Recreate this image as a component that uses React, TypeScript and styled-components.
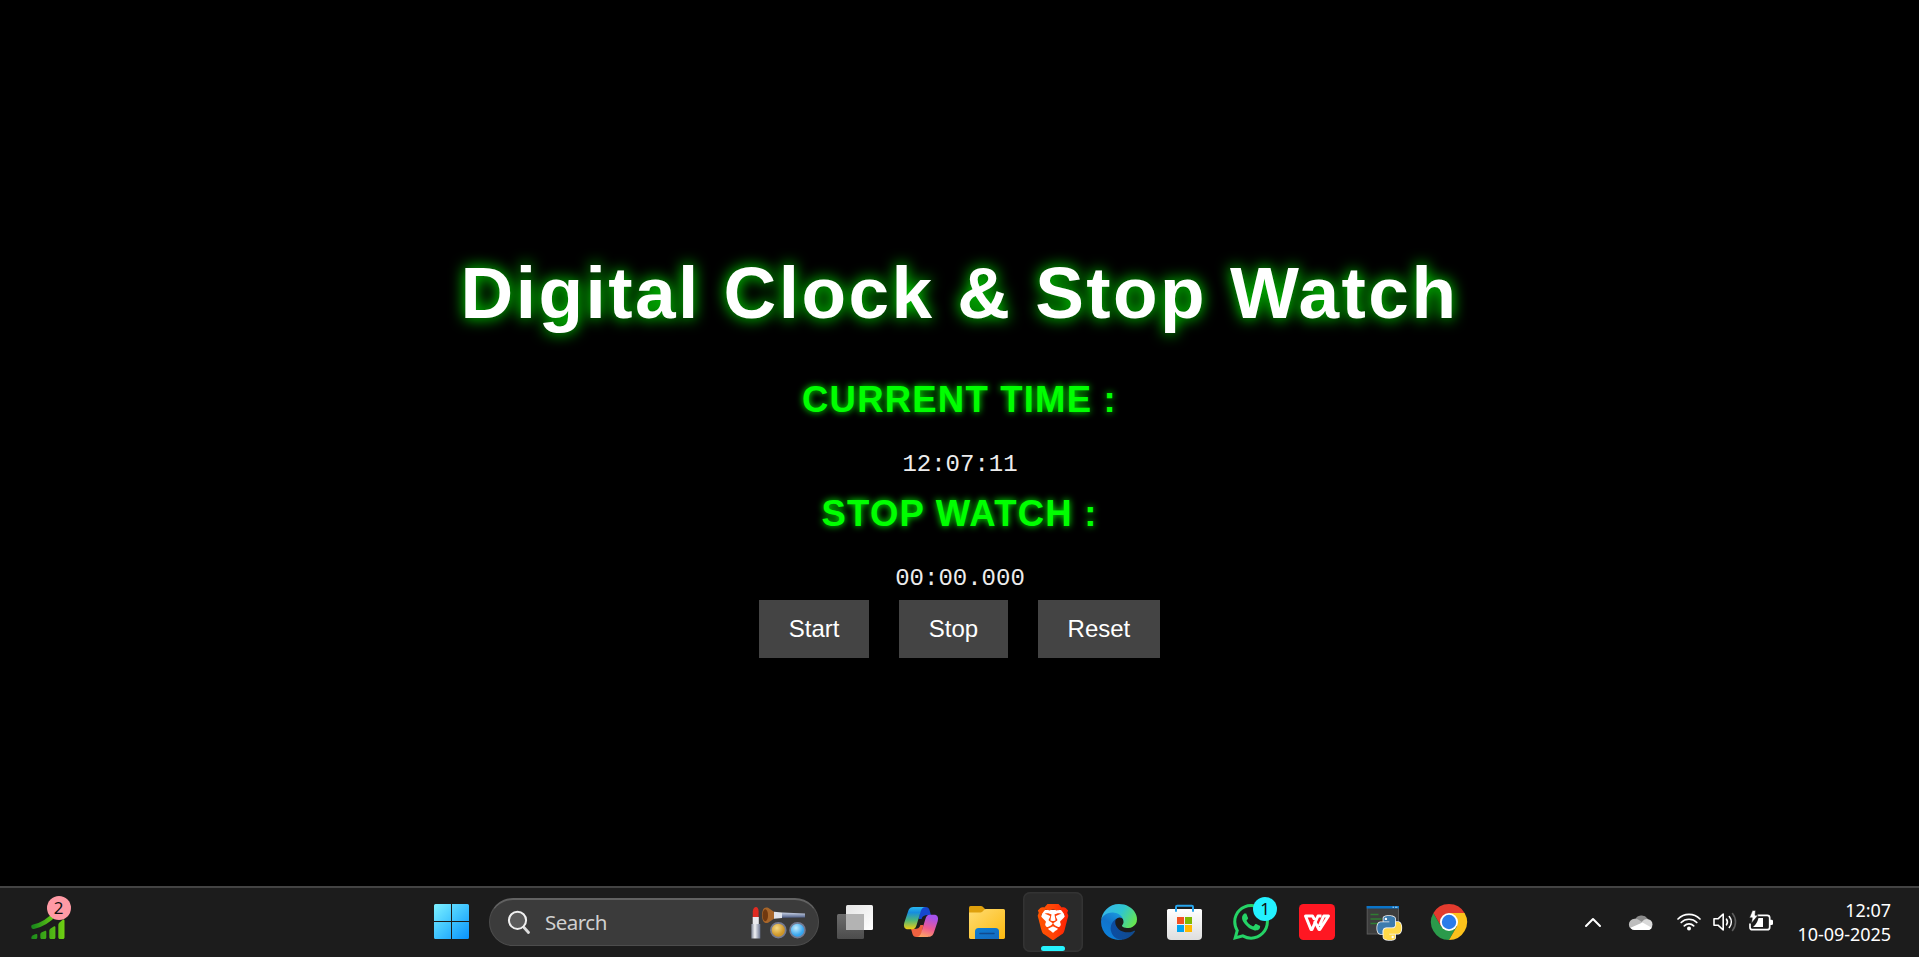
import React from "react";
import styled, { createGlobalStyle, css } from "styled-components";
import { SiBrave, SiWhatsapp } from "react-icons/si";

const GlobalStyle = createGlobalStyle`
  * { box-sizing: border-box; }
  html, body { margin: 0; padding: 0; background: #000; overflow: hidden; }
`;

const Screen = styled.div`
  display: flex;
  flex-direction: column;
  width: 100vw;
  height: 100vh;
  background: #000;
  color: #fff;
  font-family: Arial, "Liberation Sans", sans-serif;
`;

const Page = styled.main`
  flex: 1;
  display: flex;
  flex-direction: column;
  align-items: center;
  padding-top: 252px;
`;

const Title = styled.h1`
  margin: 0 0 45px;
  font-size: 73px;
  line-height: 82px;
  letter-spacing: 2.45px;
  white-space: nowrap;
  text-shadow: 0 0 15px #00ff00;
`;

const Heading = styled.h2`
  margin: 0 0 31px;
  font-size: 36.5px;
  line-height: 41px;
  letter-spacing: 1.2px;
  text-transform: uppercase;
  color: #00ff00;
  text-shadow: 0 0 7.5px #00ff00;
`;

const Readout = styled.div<{ $after: number }>`
  margin-bottom: ${(p) => p.$after}px;
  padding-left: 1px;
  font-family: "Liberation Mono", "Courier New", monospace;
  font-size: 24px;
  line-height: 27px;
  color: #ececec;
`;

const Controls = styled.div`
  display: flex;
  gap: 29.400px;
`;

const Button = styled.button`
  height: 58px;
  padding: 0 30px;
  border: 0;
  background: #444;
  color: #fff;
  font: 24px/28px Arial, "Liberation Sans", sans-serif;
`;

const Taskbar = styled.footer`
  flex: none;
  display: flex;
  align-items: center;
  height: 71px;
  padding-bottom: 2px;
  border-top: 2px solid #434343;
  background: #1c1c1c;
  font-family: "Segoe UI", "Noto Sans", sans-serif;
`;

const Widgets = styled.div`
  width: 421px;
  padding-left: 30px;
`;

const Apps = styled.div`
  display: flex;
  align-items: center;
  gap: 6px;
`;

const Slot = styled.div<{ $active?: boolean }>`
  position: relative;
  display: flex;
  align-items: center;
  justify-content: center;
  width: 60px;
  height: 60px;
  border-radius: 7px;
  ${(p) =>
    p.$active &&
    css`
      background: #2a2a2a;
      box-shadow: inset 0 0 0 1.5px #333;
      &::after {
        content: "";
        position: absolute;
        left: 18px;
        bottom: 1px;
        width: 24px;
        height: 5px;
        border-radius: 3px;
        background: #26f3ff;
      }
    `}
`;

const WidgetIcon = styled.div`
  position: relative;
  width: 36px;
  height: 36px;
`;

const Glyph = styled.svg`
  display: block;
  flex: none;
  overflow: visible;
`;

const Badge = styled.span<{ $color: string; $x: number; $y: number }>`
  position: absolute;
  left: ${(p) => p.$x}px;
  top: ${(p) => p.$y}px;
  width: 24px;
  height: 24px;
  border-radius: 50%;
  background: ${(p) => p.$color};
  color: #111;
  font-size: 17px;
  line-height: 24px;
  text-align: center;
`;

const SearchBox = styled.div`
  display: flex;
  align-items: center;
  width: 330px;
  height: 48px;
  margin: 0 0 0 2px;
  padding: 0 12px 0 16.500px;
  border: 1.5px solid #4c4c4c;
  border-top: 2px solid #626262;
  border-radius: 24px;
  background: #3b3b3b;
`;

const SearchLabel = styled.span`
  flex: 1;
  padding-left: 14.500px;
  color: #d0d0d0;
  font-size: 20.5px;
  line-height: 28px;
  letter-spacing: -0.5px;
`;

const Tray = styled.div`
  display: flex;
  align-items: center;
  margin-left: auto;
  padding-right: 28px;
`;

const TrayItem = styled.div<{ $gap: number }>`
  display: flex;
  margin-right: ${(p) => p.$gap}px;
`;

const DateTime = styled.div`
  width: 117px;
  text-align: right;
  font-size: 18px;
  line-height: 24px;
  letter-spacing: -0.05px;
  white-space: nowrap;
`;

const BraveMark = styled.div`
  display: grid;
  place-items: center;
  & > * {
    grid-area: 1 / 1;
  }
`;

const ChartIcon = () => (
  <Glyph width="36" height="36" viewBox="0 0 36 36">
    <defs>
      <linearGradient id="chart" x1="0" x2="1">
        <stop offset="0" stopColor="#1b8a1b" />
        <stop offset="1" stopColor="#6fd012" />
      </linearGradient>
    </defs>
    <path d="M3.500 22.700C13 21 19 16.500 26 9" fill="none" stroke="url(#chart)" strokeWidth="4.600" strokeLinecap="round" />
    <path
      fill="url(#chart)"
      d="M1.300 34c0-2.500 2.500-3.200 5-4 .6-.2 1 .2 1 1v2.200c0 1-.7 1.800-1.700 1.800H2.500C1.700 35 1.300 34.700 1.300 34zM10.300 30.500c0-1.300.7-2 2-2.500l2.500-1c1-.4 1.500 0 1.500 1v5.200c0 1-.6 1.800-1.600 1.800h-2.800c-1 0-1.600-.8-1.600-1.800zM19.300 27c0-1.300.6-2 1.700-2.700l2.800-1.800c1-.6 1.600-.2 1.600.8v9.900c0 1-.6 1.800-1.600 1.800h-2.800c-1 0-1.700-.8-1.700-1.800zM28.300 21c0-1.300.6-2 1.500-2.800l2.900-2.400c.9-.7 1.800-.4 1.800.8v16.600c0 1-.7 1.800-1.700 1.800H30c-1 0-1.700-.8-1.700-1.800z"
    />
  </Glyph>
);

const StartIcon = () => (
  <Glyph width="35" height="35" viewBox="0 0 35 35">
    <defs>
      <linearGradient id="win" x1="0" y1="0" x2="35" y2="35" gradientUnits="userSpaceOnUse">
        <stop offset="0" stopColor="#7df1ff" />
        <stop offset=".5" stopColor="#3fc4ff" />
        <stop offset="1" stopColor="#0892ff" />
      </linearGradient>
    </defs>
    <path
      fill="url(#win)"
      d="M1.500 0H17v17H0V1.500Q0 0 1.500 0zM18 0h15.500Q35 0 35 1.500V17H18zM0 18h17v17H1.500Q0 35 0 33.500zM18 18h17v15.500q0 1.500-1.500 1.500H18z"
    />
  </Glyph>
);

const MagnifierIcon = () => (
  <Glyph width="24" height="24" viewBox="0 0 24 24">
    <path d="M17 17.500l4.500 5" stroke="#ddd" strokeWidth="2.800" strokeLinecap="round" />
    <circle cx="10.500" cy="10.300" r="8.600" fill="#5b5b5b" stroke="#f0f0f0" strokeWidth="2" />
  </Glyph>
);

const MakeupArt = () => (
  <Glyph width="55" height="33" viewBox="0 0 55 33">
    <defs>
      <linearGradient id="metal" x1="0" x2="1">
        <stop offset="0" stopColor="#7e8494" />
        <stop offset=".4" stopColor="#f2f3f6" />
        <stop offset="1" stopColor="#69738e" />
      </linearGradient>
      <linearGradient id="handle" x1="0" x2="0" y1="0" y2="1">
        <stop offset="0" stopColor="#c9d3e6" />
        <stop offset="1" stopColor="#4c5c85" />
      </linearGradient>
      <radialGradient id="gold" cx=".4" cy=".35">
        <stop offset="0" stopColor="#f7da84" />
        <stop offset="1" stopColor="#cd9527" />
      </radialGradient>
      <radialGradient id="azure" cx=".4" cy=".35">
        <stop offset="0" stopColor="#c2edff" />
        <stop offset="1" stopColor="#36a5ee" />
      </radialGradient>
    </defs>
    <path d="M1.800 12V5.500C1.800 3 3.500 1 5 1s2.600 1.800 2.600 4.300V12z" fill="#e02b22" />
    <path d="M1.700 11h6.100v8H1.700z" fill="#e9e9ee" />
    <path d="M.3 18h9v14.500h-9z" fill="url(#metal)" />
    <path d="M17.500 2C13 .3 11 3.500 11 9.300s2.500 9.200 6.500 7.200L24 12V6.500z" fill="#a8662a" />
    <ellipse cx="14.300" cy="9.300" rx="2.700" ry="6" fill="#70380f" />
    <path d="M23 5.700l8 .8v5.400l-8 .8z" fill="#dfe3eb" />
    <path d="M31 6.500l23 1v4l-23 .3z" fill="url(#handle)" />
    <circle cx="27.300" cy="24.200" r="7.400" fill="url(#gold)" stroke="#747a91" strokeWidth="1.700" />
    <circle cx="46.500" cy="24.200" r="7.400" fill="url(#azure)" stroke="#747a91" strokeWidth="1.700" />
  </Glyph>
);

const TaskViewIcon = () => (
  <Glyph width="36" height="36" viewBox="0 0 36 36">
    <defs>
      <linearGradient id="pane" x1="0" x2="1" y1="0" y2="1">
        <stop offset="0" stopColor="#e4e4e4" />
        <stop offset="1" stopColor="#fff" />
      </linearGradient>
      <linearGradient id="paneBack" x1="0" x2="0" y1="0" y2="1">
        <stop offset="0" stopColor="#6c6c6c" />
        <stop offset="1" stopColor="#4c4c4c" />
      </linearGradient>
    </defs>
    <rect x="0" y="10" width="27" height="25" rx="1.500" fill="url(#paneBack)" />
    <rect x="9" y="1" width="27" height="25" rx="1.500" fill="url(#pane)" />
    <path d="M9 10h18v16H10.500Q9 26 9 24.500z" fill="#b3b3b3" />
  </Glyph>
);

const CopilotIcon = () => (
  <Glyph width="36" height="36" viewBox="0 0 36 36">
    <defs>
      <linearGradient id="cpLeft" x1="0" x2="0" y1="0" y2="1">
        <stop offset="0" stopColor="#28b7f0" />
        <stop offset=".25" stopColor="#168ddf" />
        <stop offset=".6" stopColor="#4fb678" />
        <stop offset="1" stopColor="#f2cc11" />
      </linearGradient>
      <linearGradient id="cpRight" x1=".3" x2="0" y1="0" y2="1">
        <stop offset="0" stopColor="#a652eb" />
        <stop offset=".5" stopColor="#ed5a91" />
        <stop offset="1" stopColor="#ffb35a" />
      </linearGradient>
    </defs>
    <path d="M18 3h4.500c2.300 0 3.400 1 4.100 3.300l1.300 4.700h-3c-3.500 0-5.500 1-6.300 4h-3z" fill="#1747cf" />
    <path d="M18 33h-4.500c-2.300 0-3.400-1-4.100-3.300L8.100 25h3c3.500 0 5.500-1 6.300-4h3z" fill="#ee6140" />
    <path d="M11.500 3H22c-2.500.3-3.500 2-4.300 4.500L13.600 21c-.8 2.800-2 4.300-4.500 4.300H5c-3.500 0-4.700-2.500-3.700-6.500L4.900 7.900C6.100 4.300 7.500 3 11.500 3z" fill="url(#cpLeft)" />
    <path d="M24.500 33H14c2.500-.3 3.500-2 4.300-4.500L22.400 15c.8-2.800 2-4.300 4.500-4.300H31c3.500 0 4.700 2.500 3.700 6.500l-3.600 10.900c-1.200 3.600-2.600 4.900-6.600 4.900z" fill="url(#cpRight)" />
  </Glyph>
);

const FolderIcon = () => (
  <Glyph width="36" height="36" viewBox="0 0 36 36">
    <defs>
      <linearGradient id="folder" x1="0" x2="1" y1="0" y2="1">
        <stop offset="0" stopColor="#ffdc72" />
        <stop offset="1" stopColor="#fcb90f" />
      </linearGradient>
      <linearGradient id="folderBlue" x1="0" x2="1" y1="0" y2="1">
        <stop offset="0" stopColor="#0c7ed4" />
        <stop offset="1" stopColor="#1769bd" />
      </linearGradient>
    </defs>
    <path d="M0 3.500Q0 2 1.500 2H12q1 0 1.800.8L16 5v8H0z" fill="#dfa00c" />
    <path d="M0 8.500h11.500q1 0 1.800-.8L15 6q.7-.9 1.800-.9h17.700Q36 5.100 36 6.600v26.900q0 1.400-1.500 1.400h-33Q0 34.900 0 33.500z" fill="url(#folder)" />
    <path d="M6 35v-7.500Q6 24 9.500 24h17q3.500 0 3.500 3.500V35z" fill="url(#folderBlue)" />
    <path d="M11 29.400h14" stroke="#114a8d" strokeWidth="1.500" strokeLinecap="round" />
  </Glyph>
);

const BraveIcon = () => (
  <BraveMark>
    <Glyph width="36" height="36" viewBox="0 0 36 36">
      <defs>
        <linearGradient id="brave" x1="0" x2="1">
          <stop offset="0" stopColor="#ff5601" />
          <stop offset=".5" stopColor="#ff4407" />
          <stop offset="1" stopColor="#ff1f03" />
        </linearGradient>
      </defs>
      <path d="M8 6h20l3 10-5 13-8 5-8-5-5-13z" fill="#fff" />
    </Glyph>
    <SiBrave size={36} fill="url(#brave)" color="#ff4407" />
  </BraveMark>
);

const EdgeIcon = () => (
  <Glyph width="36" height="36" viewBox="0 0 256 256">
    <defs>
      <linearGradient id="edgeDark" x1=".2" x2="1">
        <stop offset="0" stopColor="#0c4da0" />
        <stop offset="1" stopColor="#114a8b" />
      </linearGradient>
      <linearGradient id="edgeBlue" x1=".8" y1="0" x2=".3" y2="1">
        <stop offset="0" stopColor="#1ba0e2" />
        <stop offset=".5" stopColor="#1273ca" />
        <stop offset="1" stopColor="#0b82dc" />
      </linearGradient>
      <linearGradient id="edgeGreen" x1="0" y1=".3" x2="1" y2=".7">
        <stop offset="0" stopColor="#35b5ec" />
        <stop offset=".5" stopColor="#2fc6cf" />
        <stop offset="1" stopColor="#69e64b" />
      </linearGradient>
    </defs>
    <path fill="url(#edgeDark)" d="M235.680 190.170c-3.400 1.770-6.910 3.350-10.500 4.700a101.730 101.730 0 0 1-35.800 6.460c-47.170 0-88.260-32.440-88.260-74.080.12-11.400 6.420-21.840 16.460-27.240-42.670 1.800-53.630 46.260-53.630 72.300 0 73.650 67.880 81.120 82.500 81.120 7.890 0 19.780-2.300 26.920-4.550l1.300-.44a128.340 128.340 0 0 0 66.600-52.800 4 4 0 0 0-5.590-5.470z" />
    <path fill="url(#edgeBlue)" d="M105.730 241.420a79.200 79.200 0 0 1-22.740-21.340 80.720 80.720 0 0 1 34.600-120.070c3.120-1.470 8.450-4.130 15.540-4a32.350 32.350 0 0 1 25.690 13 31.880 31.880 0 0 1 6.360 18.660c0-.21 24.460-79.600-80-79.600-43.900 0-85 41.660-85 78.210a130.150 130.150 0 0 0 12.110 56 128 128 0 0 0 156.380 67.110 75.550 75.550 0 0 1-62.940-7.970z" />
    <path fill="url(#edgeGreen)" d="M152.330 148.860c-.81 1.050-3.300 2.500-3.300 5.660 0 2.610 1.700 5.120 4.720 7.230 14.380 10 41.490 8.680 41.560 8.680a59.560 59.560 0 0 0 30.270-8.350A61.380 61.380 0 0 0 256 109.200c.26-22.410-8-37.310-11.340-43.910C223.460 23.840 177.720 0 128 0A128 128 0 0 0 0 126.200c.48-36.540 36.800-66.050 80-66.050 3.500 0 23.460.34 42 10.070 16.340 8.580 24.900 18.940 30.850 29.210 6.180 10.670 7.280 24.150 7.280 29.520s-2.740 13.330-7.800 19.910z" />
  </Glyph>
);

const StoreIcon = () => (
  <Glyph width="36" height="36" viewBox="0 0 36 36">
    <defs>
      <linearGradient id="bag" x1="0" x2="0" y1="0" y2="1">
        <stop offset="0" stopColor="#fff" />
        <stop offset="1" stopColor="#dedede" />
      </linearGradient>
    </defs>
    <path d="M0 6.500Q0 5 1.500 5h32Q35 5 35 6.500V32q0 4-4 4H4q-4 0-4-4z" fill="url(#bag)" />
    <path d="M9 7.700V3q0-1.200 1.200-1.200h14.600Q26 1.800 26 3v4.700" fill="none" stroke="#28a5ec" strokeWidth="2" />
    <path d="M10 13h7v7h-7z" fill="#f25022" />
    <path d="M18 13h7v7h-7z" fill="#7fba00" />
    <path d="M10 21h7v7h-7z" fill="#00a4ef" />
    <path d="M18 21h7v7h-7z" fill="#ffb900" />
  </Glyph>
);

const WpsIcon = () => (
  <Glyph width="36" height="36" viewBox="0 0 36 36">
    <rect width="36" height="36" rx="4.500" fill="#ff1722" />
    <g fill="none" stroke="#fff" strokeWidth="3" strokeLinejoin="round">
      <path d="M15.500 15.500L13.500 12H6.500l5.500 13.500h1L19 12h3.500" />
      <path d="M15.500 17l4.500 8.500h.8L29.500 12h-4.800l-4.500 10" />
    </g>
  </Glyph>
);

const SNAKE =
  "M14.250.18l.9.2.73.26.59.3.45.32.34.34.25.34.16.33.1.3.04.26.02.2-.01.13V8.500l-.05.63-.13.55-.21.46-.26.38-.3.31-.33.25-.35.19-.35.14-.33.1-.3.07-.26.04-.21.02H8.770l-.69.05-.59.14-.5.22-.41.27-.33.32-.27.35-.2.36-.15.37-.1.35-.07.32-.04.27-.02.21v3.060H3.170l-.21-.03-.28-.07-.32-.12-.35-.18-.36-.26-.36-.36-.35-.46-.32-.59-.28-.73-.21-.88-.14-1.050-.05-1.230.06-1.220.16-1.040.24-.87.32-.71.36-.57.4-.44.42-.33.42-.24.4-.16.36-.1.32-.05.24-.01h.16l.06.01h8.160v-.83H6.180l-.01-2.750-.02-.37.05-.34.11-.31.17-.28.25-.26.31-.23.38-.2.44-.18.51-.15.58-.12.64-.1.71-.06.77-.04.84-.02 1.270.05z";

const PythonIcon = () => (
  <Glyph width="36" height="36" viewBox="0 0 36 36">
    <rect x="2.200" y="2.500" width="31.300" height="27.500" fill="#3d3d3d" stroke="#5b5b5b" />
    <path d="M1.700 2h32.300v2.500H1.700z" fill="#0a74c9" />
    <path d="M27.500 3.200h1.500M30 3.200h2.500" stroke="#b7dcf7" strokeWidth="1" />
    <path d="M5.500 10.500h8M5.500 15h11M5.500 19.500h9" stroke="#2f7d32" strokeWidth="1.400" />
    <g transform="translate(12.300 12)" stroke="#f4f4f4" strokeWidth="1.600" paintOrder="stroke">
      <path d={SNAKE} fill="#3c7bae" />
      <path d={SNAKE} fill="#ffd949" transform="rotate(180 12 12)" />
    </g>
    <circle cx="20.900" cy="14.900" r="1.200" fill="#fff" />
    <circle cx="27.700" cy="33" r="1.200" fill="#fff" />
  </Glyph>
);

const ChromeIcon = () => (
  <Glyph width="36" height="36" viewBox="0 0 36 36">
    <path d="M2.400 9A18 18 0 0 0 18 36l7.800-13.500H10.200z" fill="#2b9a4b" />
    <path d="M18 36A18 18 0 0 0 33.600 9H18l7.800 13.500z" fill="#fcc21b" />
    <path d="M18 9h15.600A18 18 0 0 0 2.400 9l7.800 13.500z" fill="#e33b2e" />
    <circle cx="18" cy="18" r="9" fill="#fff" />
    <circle cx="18" cy="18" r="7.200" fill="#2a7bea" />
  </Glyph>
);

const ChevronIcon = () => (
  <Glyph width="16" height="16" viewBox="0 0 16 16">
    <path d="M1 12l7-7 7 7" fill="none" stroke="#fff" strokeWidth="2" strokeLinecap="round" strokeLinejoin="round" />
  </Glyph>
);

const CloudIcon = () => (
  <Glyph width="24" height="18" viewBox="0 0 24 18">
    <path d="M6 7a7 6.500 0 0 1 12.500-1.500L19 9H7z" fill="#8b8b8b" />
    <path d="M5.500 17a5.600 5.600 0 0 1 0-11.200c2 0 3.200.4 4.500 1.300l6 3.900-8 6z" fill="#bdbdbd" />
    <path d="M12.500 9.500c1.500-2.500 3.500-3.500 5.500-3.500a5.500 5.500 0 0 1 0 11L12 15z" fill="#d9d9d9" />
    <path d="M1.500 14.800L13.500 9.500l9.300 5.200C22 16.300 20.500 17 18.500 17h-13c-1.700 0-3-.8-4-2.200z" fill="#fff" />
  </Glyph>
);

const WifiIcon = () => (
  <Glyph width="24" height="18" viewBox="0 0 24 18">
    <g fill="none" stroke="#fff" strokeWidth="1.700" strokeLinecap="round">
      <path d="M1 6a15.500 15.500 0 0 1 22 0" />
      <path d="M4.200 9.500a11 11 0 0 1 15.600 0" />
      <path d="M7.300 12.800a6.600 6.600 0 0 1 9.400 0" />
    </g>
    <circle cx="12" cy="15.600" r="2" fill="#fff" />
  </Glyph>
);

const SpeakerIcon = () => (
  <Glyph width="24" height="20" viewBox="0 0 24 20">
    <g fill="none" stroke="#fff" strokeWidth="1.600" strokeLinecap="round" strokeLinejoin="round">
      <path d="M1 6.800h4L10.200 2v16L5 13.200H1z" />
      <path d="M13.500 7.200a5 5 0 0 1 0 5.600" />
      <path d="M16.300 4.500a8.800 8.800 0 0 1 0 11" />
      <path d="M19.500 1.500a13.500 13.500 0 0 1 0 17" stroke="#5c5c5c" />
    </g>
  </Glyph>
);

const BatteryIcon = () => (
  <Glyph width="24" height="20" viewBox="0 0 24 20">
    <path d="M8.500 3.300h9.700q2.500 0 2.500 2.500v9.400q0 2.500-2.500 2.500H3.400Q1 17.700 1 15.200V11.500" fill="none" stroke="#fff" strokeWidth="1.700" />
    <path d="M21 7.700h1.500q1.500 0 1.500 1.300v2.800q0 1.300-1.500 1.300H21z" fill="#fff" />
    <path d="M9.500 6H14v9H4q4-3 5.500-9z" fill="#fff" />
    <path d="M3.500-1.500h3L6 3.300h3l-6.500 8 .8-5.500H.5z" fill="#fff" stroke="#1c1c1c" strokeWidth=".5" />
  </Glyph>
);

export default function App() {
  return (
    <Screen>
      <GlobalStyle />
      <Page>
        <Title>Digital Clock &amp; Stop Watch</Title>
        <Heading>Current Time :</Heading>
        <Readout $after={15}>12:07:11</Readout>
        <Heading>Stop Watch :</Heading>
        <Readout $after={8}>00:00.000</Readout>
        <Controls>
          <Button>Start</Button>
          <Button>Stop</Button>
          <Button>Reset</Button>
        </Controls>
      </Page>
      <Taskbar>
        <Widgets>
          <WidgetIcon>
            <ChartIcon />
            <Badge $color="#ff9aa5" $x={16.5} $y={-8}>2</Badge>
          </WidgetIcon>
        </Widgets>
        <Apps>
          <Slot><StartIcon /></Slot>
          <SearchBox>
            <MagnifierIcon />
            <SearchLabel>Search</SearchLabel>
            <MakeupArt />
          </SearchBox>
          <Slot><TaskViewIcon /></Slot>
          <Slot><CopilotIcon /></Slot>
          <Slot><FolderIcon /></Slot>
          <Slot $active><BraveIcon /></Slot>
          <Slot><EdgeIcon /></Slot>
          <Slot><StoreIcon /></Slot>
          <Slot>
            <SiWhatsapp size={36} color="#25d366" />
            <Badge $color="#23f1ff" $x={32} $y={5}>1</Badge>
          </Slot>
          <Slot><WpsIcon /></Slot>
          <Slot><PythonIcon /></Slot>
          <Slot><ChromeIcon /></Slot>
        </Apps>
        <Tray>
          <TrayItem $gap={28}><ChevronIcon /></TrayItem>
          <TrayItem $gap={24}><CloudIcon /></TrayItem>
          <TrayItem $gap={12}><WifiIcon /></TrayItem>
          <TrayItem $gap={12}><SpeakerIcon /></TrayItem>
          <TrayItem $gap={1}><BatteryIcon /></TrayItem>
          <DateTime>
            <div>12:07</div>
            <div>10-09-2025</div>
          </DateTime>
        </Tray>
      </Taskbar>
    </Screen>
  );
}
